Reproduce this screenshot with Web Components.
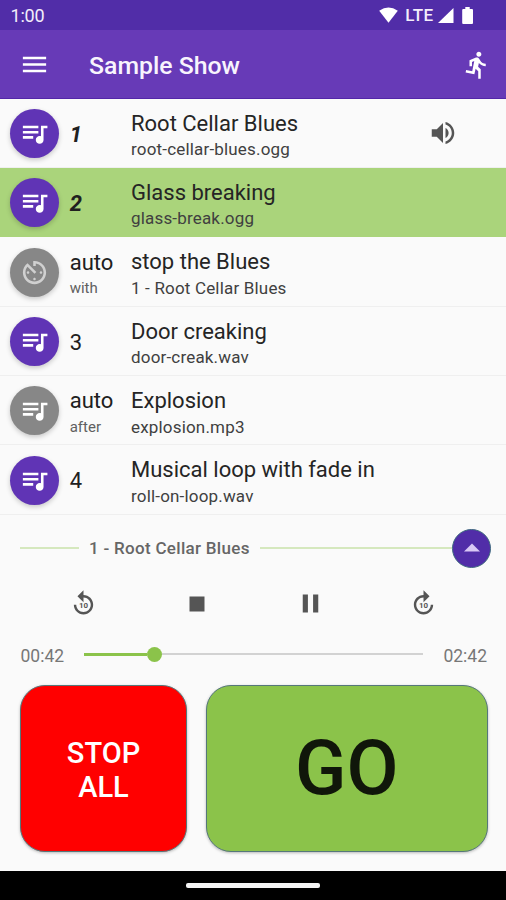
<!DOCTYPE html>
<html lang="en">
<head>
<meta charset="utf-8">
<title>Sample Show</title>
<style>
html,body{margin:0;background:#fafafa}
body{font-family:Roboto,sans-serif;color:#202020}
</style>
</head>
<body>
<show-app></show-app>
<script>
const define = (name, render) => customElements.define(name, class extends HTMLElement {
  connectedCallback() {
    if (this.shadowRoot) return;
    this.attachShadow({ mode: 'open' }).innerHTML =
      '<style>*{box-sizing:border-box}svg{display:block}</style>' + render(this);
  }
});

const ICONS = {
  menu: '<path d="M3 18h18v-2H3v2zm0-5h18v-2H3v2zm0-7v2h18V6H3z"/>',
  run: '<path d="M13.49 5.48c1.1 0 2-.9 2-2s-.9-2-2-2-2 .9-2 2 .9 2 2 2zm-3.6 13.9l1-4.4 2.1 2v6h2v-7.5l-2.1-2 .6-3c1.3 1.5 3.3 2.5 5.5 2.5v-2c-1.9 0-3.5-1-4.3-2.4l-1-1.6c-.4-.6-1-1-1.7-1-.3 0-.5.1-.8.1l-5.2 2.2v4.7h2v-3.4l1.8-.7-1.6 8.1-4.9-1-.4 2 7 1.4z"/>',
  queue: '<path d="M15 6H3v2h12V6zm0 4H3v2h12v-2zM3 16h8v-2H3v2zM17 6v8.18c-.31-.11-.65-.18-1-.18-1.66 0-3 1.34-3 3s1.34 3 3 3 3-1.34 3-3V8h3V6h-5z"/>',
  timer: '<path d="M11 17c0 .55.45 1 1 1s1-.45 1-1-.45-1-1-1-1 .45-1 1zm0-14v4h2V5.08c3.39.49 6 3.39 6 6.92 0 3.87-3.13 7-7 7s-7-3.13-7-7c0-1.68.59-3.22 1.58-4.42L12 13l1.41-1.41-6.8-6.8v.02C4.42 6.45 3 9.05 3 12c0 4.97 4.02 9 9 9 4.97 0 9-4.03 9-9s-4.03-9-9-9h-1zm7 9c0-.55-.45-1-1-1s-1 .45-1 1 .45 1 1 1 1-.45 1-1zM6 12c0 .55.45 1 1 1s1-.45 1-1-.45-1-1-1-1 .45-1 1z"/>',
  volume: '<path d="M3 9v6h4l5 5V4L7 9H3zm13.5 3c0-1.77-1.02-3.29-2.5-4.03v8.05c1.48-.73 2.5-2.25 2.5-4.02zM14 3.23v2.06c2.89.86 5 3.54 5 6.71s-2.11 5.85-5 6.71v2.06c4.01-.91 7-4.49 7-8.77s-2.99-7.86-7-8.77z"/>',
  back: '<path d="M12 5V1L7 6l5 5V7c3.31 0 6 2.69 6 6s-2.69 6-6 6-6-2.69-6-6H4c0 4.42 3.58 8 8 8s8-3.58 8-8-3.58-8-8-8z"/><text x="12" y="15.6" text-anchor="middle" font-size="6.6" font-weight="700">10</text>',
  forward: '<path d="M12 5V1l5 5-5 5V7c-3.31 0-6 2.69-6 6s2.69 6 6 6 6-2.69 6-6h2c0 4.42-3.58 8-8 8s-8-3.58-8-8 3.58-8 8-8z"/><text x="12" y="15.6" text-anchor="middle" font-size="6.6" font-weight="700">10</text>',
  stop: '<path d="M6 6h12v12H6z"/>',
  pause: '<path d="M6 19h4V5H6v14zm8-14v14h4V5h-4z"/>',
  up: '<path d="M4 15.5l8-8 8 8z"/>'
};

define('mat-icon', el => `<style>:host{display:block;flex:none;width:${el.getAttribute('size')}px;height:${el.getAttribute('size')}px}</style>
<svg width="100%" height="100%" viewBox="0 0 24 24" fill="currentColor">${ICONS[el.getAttribute('name')]}</svg>`);

define('status-bar', () => `<style>
:host{display:flex;align-items:center;height:30px;padding:0 33px 0 10.500px;background:#512da8;color:#f3eefb}
.time{flex:1;padding-top:1px;font-size:18px;letter-spacing:-.2px}
.lte{margin:0 4.500px 0 7px;font-weight:500;font-size:17px;letter-spacing:.4px}
</style>
<span class="time">1:00</span>
<svg width="19" height="16" viewBox="0 0 19 16" fill="#fff"><path d="M.2 3.7Q9.5-2.7 18.8 3.7L9.5 15.7z"/></svg>
<span class="lte">LTE</span>
<svg width="16" height="15" viewBox="0 0 16 15" fill="#fff"><path d="M15.5 0V15H0z"/></svg>
<svg style="margin:0 0 0 8px" width="11" height="17" viewBox="0 0 11 17" fill="#fff"><path d="M3.3 0h4.400v2H10q1 0 1 1v13q0 1-1 1H1.200q-1 0-1-1V3q0-1 1-1h2.100z"/></svg>`);

define('app-bar', () => `<style>
:host{display:flex;align-items:center;height:68.500px;padding:2px 14px 0 19px;background:#673ab7;color:#fff;border-bottom:1.500px solid #5326a8;box-sizing:border-box}
.title{flex:1;margin-left:39px;padding-top:2px;font-size:24.800px;font-weight:500;color:#f8f4fd}
</style>
<mat-icon name="menu" size="31"></mat-icon><span class="title"><slot></slot></span><mat-icon name="run" size="30"></mat-icon>`);

define('cue-row', el => {
  const a = n => el.getAttribute(n) || '';
  const auto = el.hasAttribute('when');
  return `<style>
:host{display:flex;height:69.4px;border-bottom:1px solid #efefef;padding-left:10.400px;background:#fafafa;box-sizing:border-box}
:host([selected]){background:#aad47b;border-color:#aad47b}
.dot{flex:none;width:49px;height:49px;margin-top:10.300px;border-radius:50%;display:flex;align-items:center;justify-content:center;background:${auto ? '#878787' : '#6034b5'};color:${a('icon') === 'timer' ? '#d0d0d0' : '#fff'};box-shadow:0 2px 5px #0003}
.num{width:61.300px;margin-left:10.300px;display:flex;flex-direction:column;font-size:22px}
.num b{font:${el.hasAttribute('bold') ? 'italic 700' : '400'} 22px/26px Roboto;color:#202020;margin-top:${auto ? 12.4 : 23}px}
.num small{font-size:15px;line-height:18px;margin-top:3.500px;color:#606060}
.txt{flex:1;display:flex;flex-direction:column;white-space:nowrap}
.t{font-size:22px;line-height:26px;margin-top:12px;color:#252525}
.s{font-size:17px;line-height:20px;margin-top:2.500px;letter-spacing:.18px;color:#404040}
.v{padding:19.500px 48px 0 0;color:#555}
</style>
<div class="dot"><mat-icon name="${a('icon') || 'queue'}" size="31"></mat-icon></div>
<div class="num"><b>${a('num')}</b>${auto ? `<small>${a('when')}</small>` : ''}</div>
<div class="txt"><span class="t">${a('name')}</span><span class="s">${a('sub')}</span></div>
${el.hasAttribute('playing') ? '<div class="v"><mat-icon name="volume" size="30"></mat-icon></div>' : ''}`;
});

define('player-panel', () => `<style>
:host{display:block;height:169.800px}
.head{display:flex;align-items:center;height:66.500px;padding:0 15px 0 20px}
.l{height:2px;background:#d5e8be}
.name{margin:0 10px;font-size:17px;font-weight:500;color:#666;letter-spacing:.3px}
.up{width:39px;height:39px;border-radius:50%;background:#512da8;border:1.500px solid #3f6a80;display:flex;align-items:center;justify-content:center;color:#d9c8f5}
.ctl{display:grid;grid-template-columns:repeat(4,113.200px);justify-content:center;justify-items:center;align-items:center;height:45px;padding-left:1.500px;color:#555}
.seek{display:flex;align-items:center;height:56px;padding:0 19px 0 20.500px;font-size:17.500px;color:#777}
.seek span{padding-top:3.500px}
.bar{flex:1;display:flex;align-items:center;margin:0 20px}
.done{width:63px;height:2.500px;background:#8bc34a}.knob{width:15px;height:15px;border-radius:50%;background:#8bc34a}.rest{flex:1;height:2px;background:#d2d2d2}
</style>
<div class="head"><div class="l" style="width:59px"></div><span class="name">1 - Root Cellar Blues</span><div class="l" style="flex:1"></div><div class="up"><mat-icon name="up" size="24"></mat-icon></div></div>
<div class="ctl"><mat-icon name="back" size="29"></mat-icon><mat-icon name="stop" size="30"></mat-icon><mat-icon name="pause" size="31"></mat-icon><mat-icon name="forward" size="29"></mat-icon></div>
<div class="seek"><span>00:42</span><div class="bar"><div class="done"></div><div class="knob"></div><div class="rest"></div></div><span>02:42</span></div>`);

define('big-button', () => `<style>
:host{display:flex;align-items:center;justify-content:center;text-align:center;height:167px;border-radius:25px;border:1px solid #55777a;box-shadow:0 1px 3px #0004;box-sizing:border-box}
:host([kind=stop]){width:167px;background:#f00;color:#fff;font-size:29px;line-height:34px;font-weight:500;padding-top:3px}
:host([kind=go]){flex:1;background:#8bc34a;color:#10160a;font-size:75.500px;font-weight:500}
</style><slot></slot>`);

define('nav-bar', () => `<style>
:host{display:flex;justify-content:center;height:29.500px;padding-top:12.500px;background:#000;box-sizing:border-box}
i{display:block;width:134px;height:5px;border-radius:2px;background:#f4f4f4}
</style><i></i>`);

define('show-app', () => `<style>
:host{display:flex;flex-direction:column;width:506px;height:900px;overflow:hidden;background:#fafafa}
.actions{display:flex;gap:19px;padding:0 18.500px 0 20px}
nav-bar{margin-top:auto}
</style>
<status-bar></status-bar><app-bar>Sample Show</app-bar>
<main>
<cue-row num="1" bold name="Root Cellar Blues" sub="root-cellar-blues.ogg" playing></cue-row>
<cue-row num="2" bold selected name="Glass breaking" sub="glass-break.ogg"></cue-row>
<cue-row num="auto" when="with" icon="timer" name="stop the Blues" sub="1 - Root Cellar Blues"></cue-row>
<cue-row num="3" name="Door creaking" sub="door-creak.wav"></cue-row>
<cue-row num="auto" when="after" name="Explosion" sub="explosion.mp3"></cue-row>
<cue-row num="4" name="Musical loop with fade in" sub="roll-on-loop.wav"></cue-row>
</main>
<player-panel></player-panel>
<div class="actions"><big-button kind="stop">STOP<br>ALL</big-button><big-button kind="go">GO</big-button></div>
<nav-bar></nav-bar>`);
</script>
</body>
</html>
